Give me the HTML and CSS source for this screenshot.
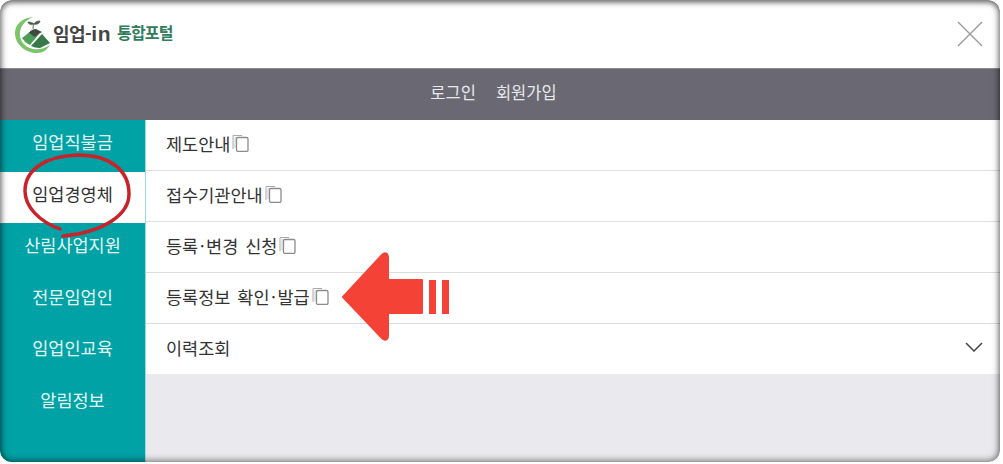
FILE: index.html
```html
<!DOCTYPE html>
<html lang="ko">
<head>
  <meta charset="UTF-8" />
  <title>임업-in 통합포털</title>
  <link rel="stylesheet" href="styles.css">
</head>
<body>
  <div class="frame">
    <header class="top">
      <div class="logo">
        <svg class="logo-mark" width="38" height="38" viewBox="15 15 38 38">
          <path d="M33 17C21 18 15 25 15 33c0 12 11 20 22 20 6 0 10-3 13-8-6 4-12 5-17 4-9-2-14-9-13-17 1-7 6-12 13-15z" fill="#7cc36a"/>
          <path d="M22 38l9-7 8 3-9 11c-4-2-6-4-8-7z" fill="#4f9e58"/>
          <path d="M31 46l11-12 8 9-10 5c-4 0-6-1-9-2z" fill="#37794a"/>
          <path d="M29 33c2-3 4-4 7-4l6 3-5 3-2 2z" fill="#3e4a40"/>
          <path d="M33 29c0-2 0-3 1-5M34 24c-1-1-3-2-6-2 0 2 3 3 6 2zM34 24c1-2 3-3 6-3 0 2-3 4-6 3z" fill="#4a5a4c" stroke="#4a5a4c" stroke-width=".8"/>
        </svg>
        <span class="logo-name">임업-<b>in</b></span>
        <span class="logo-sub">통합포털</span>
      </div>
      <svg class="close" width="26" height="26" viewBox="0 0 26 26">
        <path d="M1 1l24 24M25 1L1 25" stroke="#999" stroke-width="1.300" fill="none"/>
      </svg>
    </header>

    <nav class="account">
      <a>로그인</a>
      <a>회원가입</a>
    </nav>

    <div class="menu">
      <ul class="side">
        <li>임업직불금</li>
        <li class="on">임업경영체</li>
        <li>산림사업지원</li>
        <li>전문임업인</li>
        <li>임업인교육</li>
        <li>알림정보</li>
      </ul>
      <ul class="sub">
        <li>제도안내<svg class="copy" width="17" height="18" viewBox="0 0 17 18"><use href="#copy"/></svg></li>
        <li>접수기관안내<svg class="copy" width="17" height="18" viewBox="0 0 17 18"><use href="#copy"/></svg></li>
        <li><span>등록<span class="dot">·</span>변경 신청</span><svg class="copy" width="17" height="18" viewBox="0 0 17 18"><use href="#copy"/></svg></li>
        <li><span>등록정보 확인<span class="dot">·</span>발급</span><svg class="copy" width="17" height="18" viewBox="0 0 17 18"><use href="#copy"/></svg></li>
        <li class="more">이력조회
          <svg width="18" height="10" viewBox="0 0 18 10"><path d="M1 1l8 8 8-8" stroke="#444" stroke-width="1.500" fill="none"/></svg>
        </li>
      </ul>
    </div>

    <!-- annotations drawn over the screenshot -->
    <svg class="marks" width="1003" height="464" viewBox="0 0 1003 464">
      <path d="M60 229C40 222 25 207 25 191c0-21 20-35 53-36 32 0 51 15 51 39 0 20-24 38-66 42" fill="none" stroke="#c8222b" stroke-width="3.500" stroke-linecap="round"/>
      <path d="M343 297L382 255c3-3 6-2 6 3v22h34v33h-34v22c0 5-3 6-6 3z" fill="#f44336" stroke="#f44336" stroke-width="2" stroke-linejoin="round"/>
      <rect x="429" y="280" width="7" height="34" fill="#f44336"/>
      <rect x="442" y="280" width="7" height="34" fill="#f44336"/>
    </svg>
    <div class="edge"></div>
  </div>

  <svg width="0" height="0" class="defs">
    <symbol id="copy" viewBox="0 0 17 18">
      <path d="M1 15V1.500h9" stroke="#aaa" fill="none"/>
      <path d="M3 14V3.500h2" stroke="#ccc" fill="none"/>
      <rect x="4.500" y="3.500" width="11.500" height="14" rx="1.500" fill="#fff" stroke="#8c8c8c" stroke-width="1.300"/>
    </symbol>
  </svg>
</body>
</html>
```

FILE: styles.css
```css
:root {
  --teal: #00a2a5;
  --slate: #696873;
  --line: #dddddd;
  --text: #333333;
}

html, body {
  margin: 0;
  height: 100%;
  background: #fff;
}

body {
  font-family: 'Noto Sans CJK KR', 'Noto Sans', sans-serif;
  color: var(--text);
  overflow: hidden;
}

ul {
  list-style: none;
  margin: 0;
  padding: 0;
}

.frame {
  position: relative;
  width: 1000px;
  height: 462px;
  border-radius: 12px;
  overflow: hidden;
  display: flex;
  flex-direction: column;
  background: #fff;
}

.top {
  height: 68px;
  flex: none;
  display: flex;
  align-items: center;
  justify-content: space-between;
  padding: 0 17px 0 15px;
  border-bottom: 1px solid #8a8a90;
}

.logo {
  display: flex;
  align-items: center;
}

.logo-name {
  padding-bottom: 3px;
  font-size: 18px;
  font-weight: 700;
  letter-spacing: -0.5px;
  color: #444;
}

.logo-name b {
  font-family: 'Liberation Sans', sans-serif;
  font-size: 21px;
  letter-spacing: 0.5px;
}

.logo-sub {
  padding-bottom: 4px;
  margin-left: 6px;
  font-size: 16px;
  font-weight: 700;
  letter-spacing: -0.8px;
  color: #2f7d5a;
}

.account {
  height: 51px;
  flex: none;
  box-sizing: border-box;
  padding: 0 13px 5px 0;
  display: flex;
  justify-content: center;
  align-items: center;
  gap: 20px;
  background: var(--slate);
  color: #e8e8ea;
  font-size: 16.500px;
}

.menu {
  flex: 1;
  display: flex;
  min-height: 0;
  background: #eaeaee;
}

.side {
  width: 145px;
  flex: none;
  background: var(--teal);
  color: #e2f7f5;
  font-size: 17.500px;
  text-align: center;
  border-right: 1px solid #9adcdc;
}

.side li {
  height: 51.500px;
  line-height: 44px;
}

.side .on {
  background: #fff;
  color: var(--text);
}

.sub {
  flex: 1;
}

.sub li {
  display: flex;
  align-items: center;
  padding: 0 17px 4px 20px;
  height: 46px;
  background: #fff;
  border-bottom: 1px solid var(--line);
  font-size: 17.500px;
  word-spacing: 2px;
}

.sub .more {
  justify-content: space-between;
  border-bottom: 0;
}

.dot {
  margin: 0 1.500px;
}

.copy {
  margin-left: 2px;
}

.marks {
  position: absolute;
  left: 0;
  top: 0;
  pointer-events: none;
}

.edge {
  position: absolute;
  inset: 0;
  border-radius: 12px;
  box-shadow: inset 0 0 7px 1px rgba(0, 0, 0, 0.55), inset 0 3px 4px rgba(0, 0, 0, 0.25);
  pointer-events: none;
}

.defs {
  position: absolute;
}
```
